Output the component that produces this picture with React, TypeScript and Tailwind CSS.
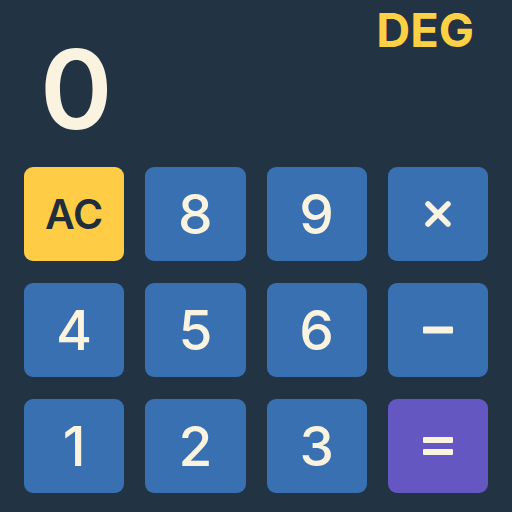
import React from "react";

type Key = { label: string; kind: "num" | "ac" | "op" | "eq" };

const keys: Key[] = [
  { label: "AC", kind: "ac" },
  { label: "8", kind: "num" },
  { label: "9", kind: "num" },
  { label: "×", kind: "op" },
  { label: "4", kind: "num" },
  { label: "5", kind: "num" },
  { label: "6", kind: "num" },
  { label: "−", kind: "op" },
  { label: "1", kind: "num" },
  { label: "2", kind: "num" },
  { label: "3", kind: "num" },
  { label: "=", kind: "eq" },
];

function OpGlyph({ label }: { label: string }) {
  if (label === "×") {
    return (
      <svg width="28" height="28" viewBox="0 0 28 28" aria-label="×">
        <path d="M4 4 L24 24 M24 4 L4 24" stroke="#FAF3E0" strokeWidth="5.5" strokeLinecap="round" />
      </svg>
    );
  }
  if (label === "−") {
    return (
      <svg width="30" height="8" viewBox="0 0 30 8" aria-label="−">
        <rect x="0" y="0.5" width="30" height="7" rx="1" fill="#FAF3E0" />
      </svg>
    );
  }
  return (
    <svg width="30" height="20" viewBox="0 0 30 20" aria-label="=">
      <rect x="0" y="1" width="30" height="6" rx="1" fill="#FAF3E0" />
      <rect x="0" y="13" width="30" height="6" rx="1" fill="#FAF3E0" />
    </svg>
  );
}

function CalcKey({ k }: { k: Key }) {
  const bg =
    k.kind === "ac" ? "bg-[#FECD45]" : k.kind === "eq" ? "bg-[#6457C1]" : "bg-[#3870B2]";
  return (
    <button className={`h-[94px] rounded-[9px] flex items-center justify-center ${bg}`}>
      {k.kind === "ac" && (
        <span className="text-[41px] font-semibold leading-none text-[#1F2D3D]">AC</span>
      )}
      {k.kind === "num" && (
        <span className="text-[55px] font-medium leading-none text-[#FAF3E0]">{k.label}</span>
      )}
      {(k.kind === "op" || k.kind === "eq") && <OpGlyph label={k.label} />}
    </button>
  );
}

export default function App() {
  return (
    <div
      className="w-[512px] h-[512px] bg-[#223344] overflow-hidden"
      style={{ fontFamily: "Inter, 'Noto Sans', sans-serif" }}
    >
      {/* display */}
      <div className="h-[167px] flex flex-col pt-[6px] pl-[40px] pr-[38px]">
        <div className="flex justify-end">
          <span className="text-[47px] font-bold leading-none text-[#FCD144]">DEG</span>
        </div>
        <div className="-mt-[19px]">
          <span className="text-[110px] font-semibold leading-none text-[#FAF3E0]">0</span>
        </div>
      </div>

      {/* keypad */}
      <div className="grid grid-cols-4 gap-x-[21px] gap-y-[22px] px-[24px]">
        {keys.map((k) => (
          <CalcKey key={k.label} k={k} />
        ))}
      </div>
    </div>
  );
}
